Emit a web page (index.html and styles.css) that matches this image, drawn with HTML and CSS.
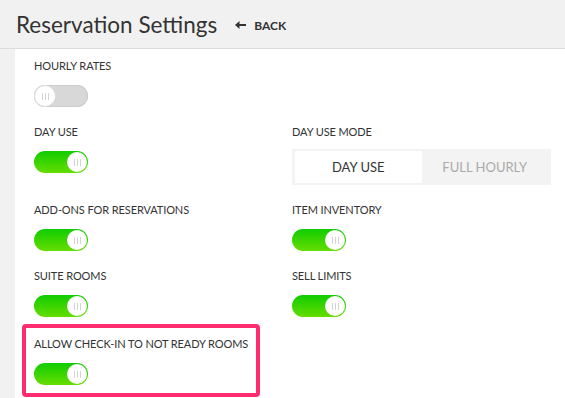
FILE: index.html
```html
<!DOCTYPE html>
<html>
  <head>
    <meta charset="utf-8">
    <title>Reservation Settings</title>
    <link rel="stylesheet" href="styles.css">
  </head>
  <body>
    <div class="header">
      <h1 class="title">Reservation Settings</h1>
      <a class="back" href="#">
        <svg class="arrow" width="11" height="8" viewBox="0 0 11 8"><path d="M0 4 L4.5 0 V3 H11 V5 H4.5 V8 Z" fill="#333"/></svg>
        BACK
      </a>
    </div>
    <div class="panel">
      <div class="grid">
        <div class="item">
          <div class="label">HOURLY RATES</div>
          <div class="toggle"><span class="knob"><i></i></span></div>
        </div>
        <div class="item"></div>

        <div class="item">
          <div class="label">DAY USE</div>
          <div class="toggle on"><span class="knob"><i></i></span></div>
        </div>
        <div class="item">
          <div class="label">DAY USE MODE</div>
          <div class="segment">
            <button class="seg active">DAY USE</button>
            <button class="seg">FULL HOURLY</button>
          </div>
        </div>

        <div class="item">
          <div class="label">ADD-ONS FOR RESERVATIONS</div>
          <div class="toggle on"><span class="knob"><i></i></span></div>
        </div>
        <div class="item">
          <div class="label">ITEM INVENTORY</div>
          <div class="toggle on"><span class="knob"><i></i></span></div>
        </div>

        <div class="item">
          <div class="label">SUITE ROOMS</div>
          <div class="toggle on"><span class="knob"><i></i></span></div>
        </div>
        <div class="item">
          <div class="label">SELL LIMITS</div>
          <div class="toggle on"><span class="knob"><i></i></span></div>
        </div>

        <div class="item highlight">
          <div class="label">ALLOW CHECK-IN TO NOT READY ROOMS</div>
          <div class="toggle on"><span class="knob"><i></i></span></div>
        </div>
      </div>
    </div>
  </body>
</html>
```

FILE: styles.css
```css
html, body {
margin: 0;
padding: 0;
}

body {
font-family: Lato, "Open Sans", sans-serif;
background-color: #f1f1f1;
color: #333;
height: 100vh;
display: flex;
flex-direction: column;
overflow: hidden;
}

.header {
display: flex;
align-items: center;
flex: none;
height: 48px;
padding-left: 16px;
border-bottom: 1px solid #dcdcdc;
}

.title {
margin: 0;
font-size: 22.5px;
font-weight: 400;
color: #333;
}

.back {
display: flex;
align-items: center;
margin-left: 18px;
margin-top: 2px;
font-size: 12px;
font-weight: 700;
color: #333;
text-decoration: none;
}

.back .arrow {
margin-right: 8px;
}

.panel {
flex: 1;
margin-left: 15px;
background-color: #fff;
padding: 9px 0 0 19px;
}

.grid {
display: grid;
grid-template-columns: 258px 259px;
row-gap: 17px;
}

.item {
display: flex;
flex-direction: column;
align-items: flex-start;
}

.label {
font-size: 11px;
letter-spacing: -0.1px;
line-height: 16px;
color: #333;
margin-bottom: 11px;
white-space: nowrap;
}

.toggle {
position: relative;
width: 54px;
height: 22px;
border-radius: 11px;
background-color: #d8d8d8;
box-shadow: inset 0 0 0 1px #ccc;
}

.toggle .knob {
position: absolute;
top: 1px;
left: 1px;
width: 20px;
height: 20px;
border-radius: 50%;
background-color: #fff;
box-shadow: 0 0 0 1px #ddd;
display: flex;
align-items: center;
justify-content: center;
}

.toggle .knob i {
width: 5px;
height: 7px;
border-left: 1px solid #d4d4d4;
border-right: 1px solid #d4d4d4;
background: linear-gradient(#d4d4d4, #d4d4d4) center / 1px 100% no-repeat;
}

.toggle.on {
background: linear-gradient(#10cc00, #66dd00);
box-shadow: none;
}

.toggle.on .knob {
left: auto;
right: 1px;
box-shadow: none;
}

.segment {
display: flex;
margin-top: -2px;
padding: 2px 3px;
width: 253px;
background-color: #f3f3f3;
}

.seg {
flex: 1;
height: 32px;
border: none;
background: none;
font-family: Lato, "Open Sans", sans-serif;
font-size: 13px;
color: #aaa;
padding: 0;
}

.seg.active {
background-color: #fff;
color: #333;
}

.highlight {
margin: -10px 0 0 -12px;
padding: 8px 0 8px 8px;
border: 4px solid #ff2d6f;
border-radius: 4px;
width: 222px;
}
```
